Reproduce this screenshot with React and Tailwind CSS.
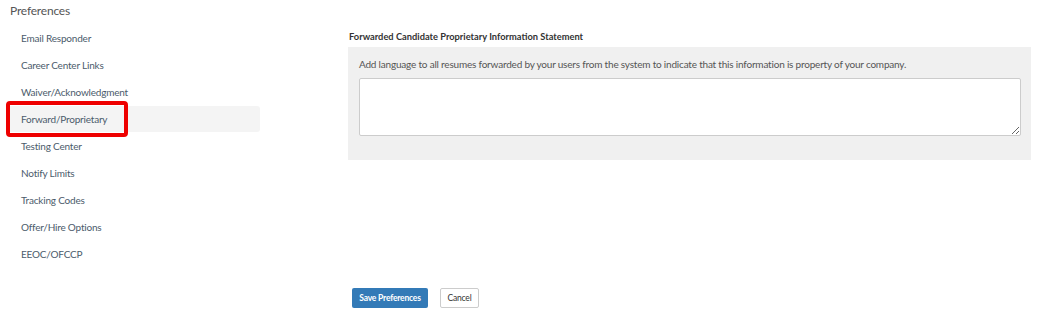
import { useState } from "react";

// Preferences screen — left nav of preference sections, right side shows the
// selected section's form (here: Forward/Proprietary).

const SECTIONS = [
  "Email Responder",
  "Career Center Links",
  "Waiver/Acknowledgment",
  "Forward/Proprietary",
  "Testing Center",
  "Notify Limits",
  "Tracking Codes",
  "Offer/Hire Options",
  "EEOC/OFCCP",
];

export default function App() {
  const [active, setActive] = useState("Forward/Proprietary");
  const [statement, setStatement] = useState("");

  return (
    <div
      className="w-[1037px] h-[313px] bg-white text-[#555] overflow-hidden"
      style={{ fontFamily: "Lato, 'Liberation Sans', sans-serif" }}
    >
      <div className="flex">
        <aside className="w-[260px] shrink-0 pt-[3px]">
          <h2 className="pl-[10px] text-[12px] tracking-[-0.2px] leading-[16px] text-[#555]">
            Preferences
          </h2>
          <nav className="mt-[6px] pl-[6px] flex flex-col gap-[1px]">
            {SECTIONS.map((s) => {
              const on = s === active;
              return (
                <div key={s} className="relative h-[26px]">
                  <button
                    type="button"
                    onClick={() => setActive(s)}
                    className={`block w-full h-[26px] text-left pl-[15px] text-[10px] tracking-[-0.2px] text-[#4b5b6b] rounded-[3px] ${
                      on ? "bg-[#f4f4f4]" : ""
                    }`}
                  >
                    {s}
                  </button>
                  {on && (
                    <span className="pointer-events-none absolute left-0 top-[-5px] w-[122px] h-[36px] border-[4px] border-[#ee0000] rounded-[4px]" />
                  )}
                </div>
              );
            })}
          </nav>
        </aside>

        <main className="flex-1 pl-[89px] pr-[6px] pt-[31px]">
          <h3 className="text-[9.3px] font-bold text-[#333] leading-[12px]">
            Forwarded Candidate Proprietary Information Statement
          </h3>
          <div className="mt-[4px] ml-[-1px] bg-[#f0f0f0] pl-[11px] pr-[10px] pt-[10px] pb-[24px]">
            <p className="text-[10px] tracking-[-0.2px] leading-[14px] text-[#555]">
              Add language to all resumes forwarded by your users from the
              system to indicate that this information is property of your
              company.
            </p>
            <textarea
              value={statement}
              onChange={(e) => setStatement(e.target.value)}
              className="mt-[7px] block w-full h-[58px] bg-white border border-[#ccc] rounded-[2px] outline-none p-1 text-[11px]"
            />
          </div>
          <div className="mt-[128px] pl-[3px] flex gap-[12px]">
            <button
              type="button"
              className="w-[76px] h-[20px] bg-[#337ab7] text-white text-[8.5px] tracking-[-0.2px] font-bold rounded-[2px]"
            >
              Save Preferences
            </button>
            <button
              type="button"
              className="w-[39px] h-[20px] bg-white border border-[#ccc] text-[#333] text-[8.5px] tracking-[-0.2px] rounded-[2px]"
            >
              Cancel
            </button>
          </div>
        </main>
      </div>
    </div>
  );
}
